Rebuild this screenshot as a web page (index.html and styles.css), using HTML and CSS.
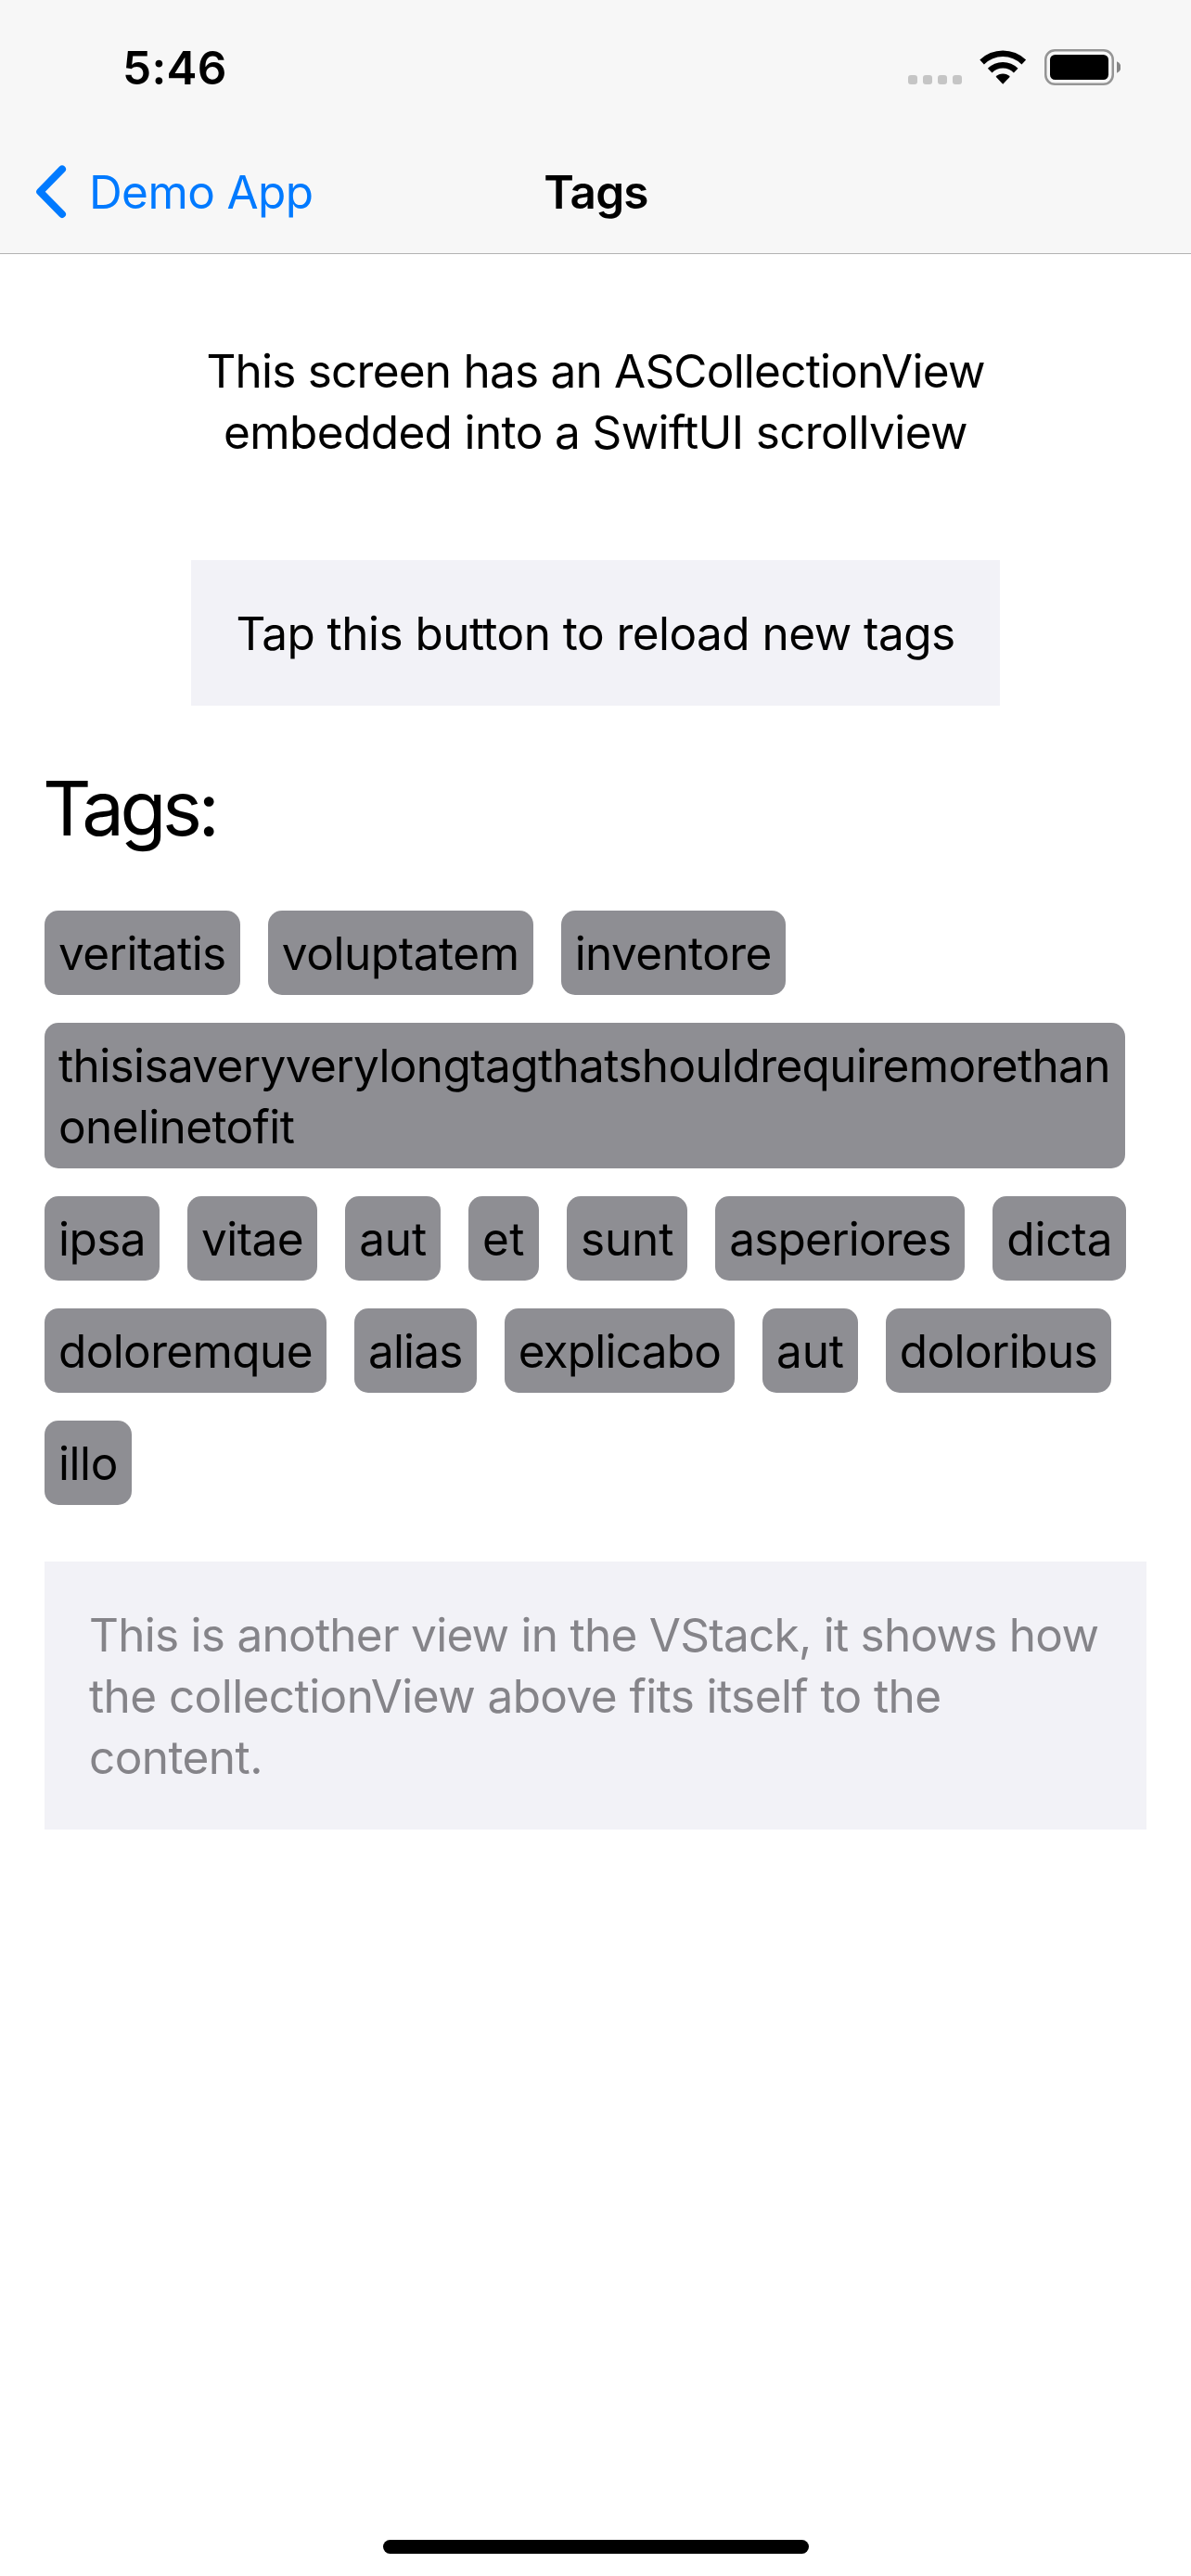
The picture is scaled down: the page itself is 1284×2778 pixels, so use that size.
FILE: index.html
```html
<!DOCTYPE html>
<html lang="en">
<head>
<meta charset="utf-8">
<title>Tags</title>
<link rel="stylesheet" href="styles.css">
</head>
<body>
<div class="screen">
  <header class="header">
    <div class="status-bar">
      <span class="time">5:46</span>
      <div class="status-icons">
        <svg class="signal" width="58" height="10" viewBox="0 0 58 10" fill="#c5c5c5" aria-hidden="true">
          <rect x="0" width="10" height="10" rx="3"/>
          <rect x="16" width="10" height="10" rx="3"/>
          <rect x="32" width="10" height="10" rx="3"/>
          <rect x="48" width="10" height="10" rx="3"/>
        </svg>
        <svg class="wifi" width="51" height="38" viewBox="0 0 51 38" aria-hidden="true">
          <path d="M.3 10.6A35.5 35.5 0 0 1 50.1 10.6L45.5 15.4A28.9 28.9 0 0 0 4.9 15.4Z"/>
          <path d="M8.9 19.7A23 23 0 0 1 41.5 19.7L36.9 24.4A16.6 16.6 0 0 0 13.5 24.4Z"/>
          <path d="M17.6 28.8A10.6 10.6 0 0 1 32.8 28.8L25.2 36.7Z"/>
        </svg>
        <svg class="battery" width="82" height="39" viewBox="0 0 82 39" aria-hidden="true">
          <rect x="1.25" y="1.25" width="72.5" height="36.5" rx="10" fill="none" stroke="#959595" stroke-width="2.5"/>
          <rect x="6" y="6" width="63" height="27" rx="5.5"/>
          <path d="M78 13.2A6.7 6.7 0 0 1 78 25.8Z" fill="#858585"/>
        </svg>
      </div>
    </div>
    <nav class="nav-bar">
      <a class="back">
        <svg width="34" height="58" viewBox="0 0 34 58" fill="none" stroke="#007aff" stroke-width="8" stroke-linecap="round" stroke-linejoin="round" aria-hidden="true">
          <path d="M29 4.4L5.2 28.7L29 53"/>
        </svg>
        <span class="back-label">Demo App</span>
      </a>
      <h1 class="nav-title">Tags</h1>
    </nav>
  </header>
  <main class="content">
    <p class="intro"><span class="intro-first">This screen has an ASCollectionView</span><br>embedded into a SwiftUI scrollview</p>
    <button class="reload" type="button">Tap this button to reload new tags</button>
    <h2 class="heading">Tags:</h2>
    <ul class="tags">
      <li class="tag">veritatis</li>
      <li class="tag track-loose">voluptatem</li>
      <li class="tag track-mid">inventore</li>
      <li class="tag tag-long">thisisaveryverylongtagthatshouldrequiremorethan<br>onelinetofit</li>
      <li class="tag">ipsa</li>
      <li class="tag">vitae</li>
      <li class="tag track-none">aut</li>
      <li class="tag track-wide">et</li>
      <li class="tag track-none">sunt</li>
      <li class="tag track-tight">asperiores</li>
      <li class="tag track-none">dicta</li>
      <li class="tag track-mid">doloremque</li>
      <li class="tag track-tight">alias</li>
      <li class="tag track-tight">explicabo</li>
      <li class="tag track-none">aut</li>
      <li class="tag track-mid">doloribus</li>
      <li class="tag track-loose">illo</li>
    </ul>
    <p class="note"><span class="note-first">This is another view in the VStack, it shows how</span><br>the collectionView above fits itself to the<br>content.</p>
  </main>
  <div class="home-indicator"></div>
</div>
</body>
</html>
```

FILE: styles.css
```css
* {
  box-sizing: border-box;
}

body {
  margin: 0;
  background: #fff;
  color: #000;
  font: 400 49.5px/66px Inter, "Liberation Sans", sans-serif;
}

h1, h2, p, ul {
  margin: 0;
  padding: 0;
}

.screen {
  display: flex;
  flex-direction: column;
  width: 1284px;
  height: 2778px;
}

.header {
  height: 274px;
  padding-top: 40px;
  background: #f7f7f7;
  border-bottom: 1px solid #b2b2b2;
}

.status-bar {
  display: flex;
  justify-content: space-between;
  height: 66px;
  padding: 0 76px 0 132px;
}

.time {
  font-weight: 600;
  letter-spacing: 0.3px;
}

.status-icons {
  display: flex;
  align-items: flex-start;
  padding-top: 13px;
}

.signal {
  margin: 28px 19px 0 0;
}

.wifi {
  margin: 1px 19px 0 0;
}

.nav-bar {
  display: grid;
  grid-template-columns: 1fr auto 1fr;
  margin-top: 68px;
  padding-left: 38px;
}

.back {
  display: flex;
  gap: 24px;
  color: #007aff;
}

.back svg {
  margin-top: 4px;
}

.back-label {
  letter-spacing: -0.6px;
}

.nav-title {
  margin-left: -37px;
  font-size: 49.5px;
  font-weight: 600;
  letter-spacing: -0.8px;
}

.content {
  display: flex;
  flex: 1;
  flex-direction: column;
  align-items: center;
  padding: 93px 48px 0;
}

.intro {
  letter-spacing: -0.62px;
  text-align: center;
}

.intro-first {
  letter-spacing: -0.78px;
}

.reload {
  width: 872px;
  margin-top: 105px;
  padding: 46px 0 45px;
  border: 0;
  background: #f2f2f7;
  color: inherit;
  font: inherit;
  letter-spacing: -0.54px;
}

.heading {
  align-self: stretch;
  margin: 61px 0 0 -2px;
  font-size: 81.4px;
  font-weight: 400;
  line-height: 100px;
  letter-spacing: -4.4px;
}

.tags {
  display: flex;
  flex-wrap: wrap;
  align-self: stretch;
  gap: 30px;
  margin-top: 60px;
  list-style: none;
}

.tag {
  padding: 13px 15px 12px;
  border-radius: 15px;
  background: #8e8e93;
  letter-spacing: -0.55px;
  white-space: nowrap;
}

.tag-long {
  width: 1165px;
  letter-spacing: -0.63px;
}

.track-wide { letter-spacing: 0.47px; }
.track-none { letter-spacing: -0.15px; }
.track-loose { letter-spacing: -0.43px; }
.track-mid { letter-spacing: -0.62px; }
.track-tight { letter-spacing: -0.8px; }

.note {
  align-self: stretch;
  margin-top: 61px;
  padding: 46px 48px 45px;
  background: #f2f2f7;
  color: #858489;
  letter-spacing: -0.58px;
}

.note-first {
  letter-spacing: -0.74px;
}

.home-indicator {
  width: 459px;
  height: 15px;
  margin: 0 auto 24px;
  border-radius: 8px;
  background: #000;
}
```
